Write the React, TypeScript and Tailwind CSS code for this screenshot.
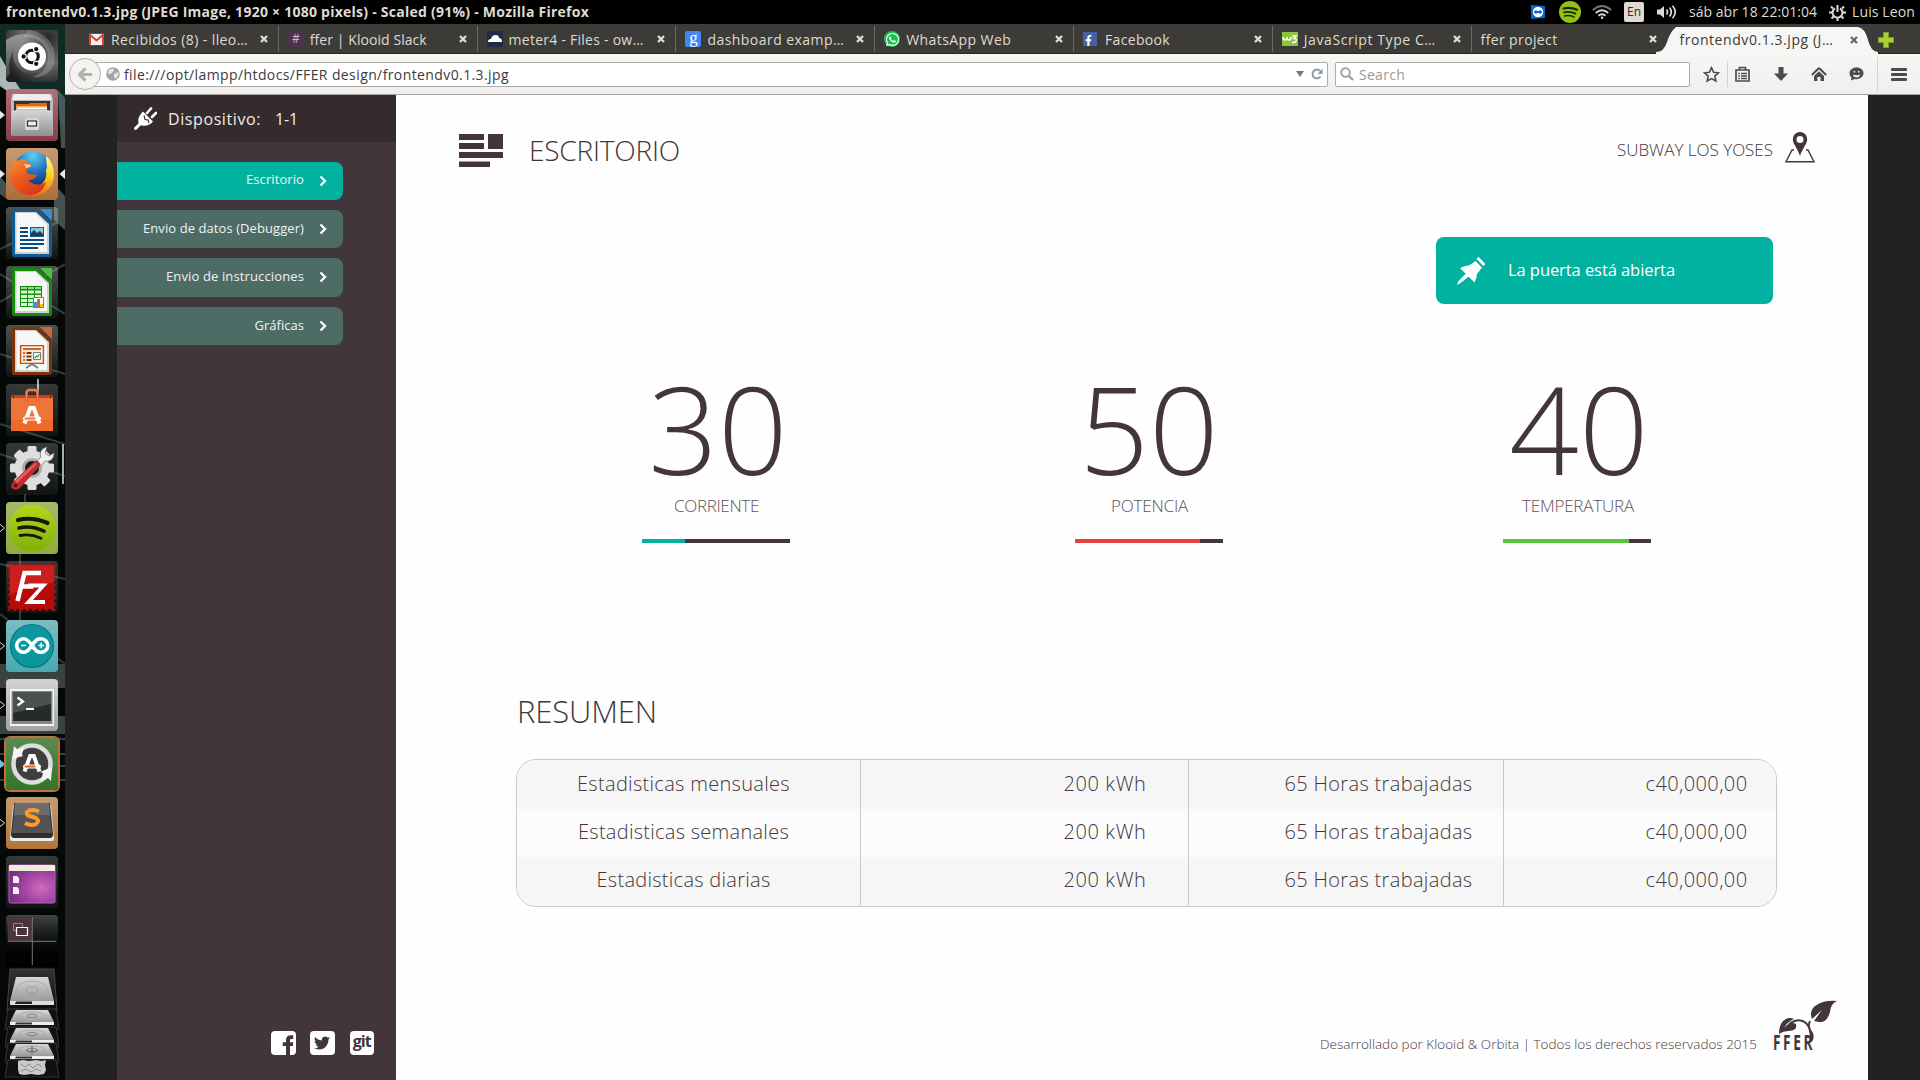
import React, { useLayoutEffect, useRef } from "react";
import { FaTwitter, FaFacebookF, FaWhatsapp } from "react-icons/fa";

/** A single line of text whose tracking is adjusted so that it spans `w` pixels. */
function Fit({ w, className = "", children }: { w: number; className?: string; children: string }) {
  const ref = useRef<HTMLSpanElement>(null);
  useLayoutEffect(() => {
    const el = ref.current;
    if (!el) return;
    el.style.letterSpacing = "0px";
    const natural = el.getBoundingClientRect().width;
    el.style.letterSpacing = `${(w - natural) / children.length}px`;
  }, [w, children]);
  return (
    <span ref={ref} className={"inline-block shrink-0 whitespace-pre " + className}>
      {children}
    </span>
  );
}

/* ---------- Launcher icons ---------- */

const UbuntuIcon = () => (
  <svg viewBox="0 0 52 52" className="size-full">
    <defs>
      <radialGradient id="ub" cx="0.8" cy="0.15" r="1">
        <stop offset="0" stopColor="#262626" />
        <stop offset="0.5" stopColor="#6a6a6a" />
        <stop offset="1" stopColor="#1c1c1c" />
      </radialGradient>
      <linearGradient id="ub2" x1="0" y1="0" x2="1" y2="1">
        <stop offset="0" stopColor="#d8d8d8" stopOpacity=".6" />
        <stop offset="1" stopColor="#555" stopOpacity=".1" />
      </linearGradient>
    </defs>
    <rect width="52" height="52" rx="4" fill="url(#ub)" />
    <path d="M0 10C14 0 38 2 44 20 46 34 38 44 26 44 12 44 4 30 8 20 4 26 2 34 4 44L0 48Z" fill="url(#ub2)" />
    <path d="M22 0C40 2 52 16 48 34 44 44 36 48 26 47 38 44 44 34 41 22 38 12 30 6 16 8Z" fill="#bbb" opacity=".35" />
    <circle cx="26" cy="26.5" r="14" fill="#fff" />
    <circle cx="26" cy="26.5" r="6.3" fill="none" stroke="#111" strokeWidth="3" />
    <g fill="#111" stroke="#fff" strokeWidth="1.1">
      <circle cx="17.6" cy="26.5" r="2.7" />
      <circle cx="30.2" cy="19.2" r="2.7" />
      <circle cx="30.2" cy="33.8" r="2.7" />
    </g>
  </svg>
);

const FilesIcon = () => (
  <svg viewBox="0 0 52 52" className="size-full">
    <defs>
      <linearGradient id="fi" x1="0" y1="0" x2="0" y2="1">
        <stop offset="0" stopColor="#d6d6d6" />
        <stop offset="1" stopColor="#909090" />
      </linearGradient>
    </defs>
    <path d="M6 5h40l1 6v35H5V11z" fill="#b9b9b9" />
    <path d="M8 5h36l2 6H6z" fill="#eee" />
    <path d="M8 12h36v12H8z" fill="#3c3029" />
    <path d="M10 15h13l1-1h17v10H10z" fill="#e2671d" />
    <path d="M10 17h31v7H10z" fill="#f6b35c" />
    <path d="M12 18.500h29v1.500H12z" fill="#fff" />
    <path d="M5.500 22l5-1h31l5 1v25h-41z" fill="url(#fi)" />
    <rect x="19" y="29" width="14" height="12" rx="2.500" fill="#d9d9d9" />
    <rect x="21.500" y="32" width="9" height="5" fill="#eee" stroke="#333" strokeWidth="1.200" />
  </svg>
);

const FirefoxIcon = () => (
  <svg viewBox="0 0 52 52" className="size-full">
    <defs>
      <radialGradient id="fg" cx=".5" cy=".1" r=".9">
        <stop offset="0" stopColor="#5fd0f5" />
        <stop offset=".5" stopColor="#1f6fb8" />
        <stop offset="1" stopColor="#0a2460" />
      </radialGradient>
      <linearGradient id="ff" x1="0" y1="0" x2=".6" y2="1">
        <stop offset="0" stopColor="#f79a2f" />
        <stop offset=".5" stopColor="#ee5e20" />
        <stop offset="1" stopColor="#d93a16" />
      </linearGradient>
      <linearGradient id="fy" x1="0" y1="0" x2="0" y2="1">
        <stop offset="0" stopColor="#fff3a0" />
        <stop offset=".5" stopColor="#fbd31f" />
        <stop offset="1" stopColor="#ee6a1c" />
      </linearGradient>
    </defs>
    <circle cx="27" cy="23" r="19.500" fill="url(#fg)" />
    <path d="M40 8C49 15 50 30 45 38 41 44 34 48 26 48L24 38C34 40 42 34 40 22 42 20 40 14 40 8Z" fill="url(#fy)" />
    <path d="M7 9c1 2 2 3 4 4 3-2 6-2 9-1l3 4 3 1c0 2-3 3-5 4-1 3 0 4 2 5 3 1 5 0 8 1-1 3-5 5-9 5 4 5 12 6 18 2-2 8-8 13-16 13C12 47 4 38 4 26 4 21 5 19 7 17Z" fill="url(#ff)" />
    <path d="M18 16l7 1c0 2-3 3-5 3z" fill="#f9cdb0" />
  </svg>
);

function DocIcon({ dark, light, children }: { dark: string; light: string; children: React.ReactNode }) {
  return (
    <svg viewBox="0 0 52 52" className="size-full">
      <path d="M8 2h23l15 13v33q0 2-2 2H8q-2 0-2-2V4q0-2 2-2z" fill={dark} />
      <path d="M9 5h21l13 12v30H9z" fill="#cfcfcf" />
      <path d="M10.500 6h19L41 17.500V45H10.500z" fill="#f7f7f7" />
      <path d="M34 2h12v12z" fill={light} />
      {children}
    </svg>
  );
}

const WriterIcon = () => (
  <DocIcon dark="#0d5c94" light="#3f8ec9">
    <path d="M14 20h8v2h-8zM14 24h8v2h-8zM14 28h8v2h-8zM14 32h24v2H14zM14 36h24v2H14zM14 40h18v2H14z" fill="#0b4c7c" />
    <path d="M24 20h14v10H24z" fill="#0b5d95" />
    <path d="M25 21h12v8H25z" fill="#83c4ea" />
    <path d="M25 29v-3l3-3 3 3 3-2 3 3v2z" fill="#263c4a" />
    <path d="M35 21h2v2h-2z" fill="#f3c13d" />
  </DocIcon>
);

const CalcIcon = () => (
  <DocIcon dark="#168a0d" light="#52bd45">
    <path d="M14 20h22v21H14z" fill="#148b0c" />
    <path d="M15 21h6v2h-6zM22 21h6v2h-6zM29 21h6v2h-6z" fill="#8ddb83" />
    <path d="M15 24.500h6v3h-6zM22 24.500h6v3h-6zM29 24.500h6v3h-6zM15 29h6v3h-6zM22 29h6v3h-6zM29 29h6v3h-6zM15 33h6v3h-6zM22 33h6v3h-6zM15 37h6v3h-6zM22 37h6v3h-6z" fill="#d8f5d4" />
    <path d="M27.500 31.500h10v10h-10z" fill="#fff" stroke="#777" />
    <path d="M28 36h3v5h-3z" fill="#2e9bea" />
    <path d="M31 33h3v8h-3z" fill="#e0611c" />
    <path d="M34 38h3v3h-3z" fill="#f4c20d" />
  </DocIcon>
);

const ImpressIcon = () => (
  <DocIcon dark="#7d3208" light="#c9683a">
    <path d="M14.600 20.600h22.800v17.800H14.600z" fill="#f9ece2" stroke="#c2500f" strokeWidth="1.400" />
    <path d="M17 23h18v2H17z" fill="#d9641c" />
    <path d="M17 27h2v2h-2zM17 30.500h2v2h-2zM17 34h2v2h-2z" fill="#d9641c" />
    <path d="M20.500 27h5v2h-5zM20.500 30.500h5v2h-5zM20.500 34h5v2h-5z" fill="#7d3208" />
    <path d="M27.500 27.500h7v7h-7z" fill="#fff" stroke="#777" />
    <path d="M28.500 33l2-2 1 1 2-3" stroke="#2fa63a" strokeWidth="1.200" fill="none" />
    <path d="M26 39l-6 4M26 39l6 4" stroke="#777" strokeWidth="1.600" />
  </DocIcon>
);

const LetterA = ({ bar }: { bar: string }) => (
  <g>
    <path d="M18.500 39.500L24.200 24h3.600L33.500 39.500" fill="none" stroke="#fff" strokeWidth="4" />
    <rect x="17" y="32.500" width="18" height="4" rx="2" fill="#fff" />
    <rect x="18.500" y="33.500" width="11" height="2" rx="1" fill={bar} />
  </g>
);

const SoftwareIcon = () => (
  <svg viewBox="0 0 52 52" className="size-full">
    <path d="M5 11h42v5H5z" fill="#c4451c" />
    <path d="M5 14h42v33H5z" fill="#ef7438" />
    <path d="M5 36h42v11H5z" fill="#f0692a" />
    <path d="M5 11l3-2v6zM47 11l-3-2v6z" fill="#8c2e12" />
    <path d="M20.500 18V9q0-3 3-3h5q3 0 3 3v9" fill="none" stroke="#c84f28" strokeWidth="3" />
    <path d="M20.500 18V9q0-3 3-3h5q3 0 3 3v9" fill="none" stroke="#f08b5c" strokeWidth="1.400" />
    <LetterA bar="#ef7438" />
  </svg>
);

const SettingsIcon = () => (
  <svg viewBox="0 0 52 52" className="size-full">
    <g fill="#dedede" transform="translate(26 25)">
      {[0, 45, 90, 135].map((a) => (
        <rect key={a} x="-4.500" y="-22" width="9" height="44" rx="1.500" transform={`rotate(${a})`} />
      ))}
      <circle r="17.500" />
      <circle r="10" fill="#aaa" />
      <circle r="7" fill="#181818" />
    </g>
    <path d="M31 18l4-4c-2-5 1-9 6-10l-2 6 4 3 5-3c0 6-4 9-9 8l-4 5z" fill="#f0f0f0" stroke="#777" strokeWidth=".8" />
    <path d="M7 39L29 18q2-1 4 1t1 4L14 45q-3 3-7 1t0-7z" fill="#c22a2c" />
    <path d="M9 38L29 20l2 1L11 40z" fill="#e4605c" />
    <circle cx="9.500" cy="42.500" r="1.800" fill="#4f0d10" />
  </svg>
);

const SpotifyTile = () => (
  <svg viewBox="0 0 52 52" className="size-full">
    <defs>
      <linearGradient id="sp" x1="0" y1="0" x2="0" y2="1">
        <stop offset="0" stopColor="#b2d81c" />
        <stop offset="1" stopColor="#82b008" />
      </linearGradient>
    </defs>
    <circle cx="26" cy="26" r="23.500" fill="url(#sp)" />
    <g fill="none" stroke="#16190a" strokeLinecap="round">
      <path d="M12 18c10-2.500 20-1 29.500 3" strokeWidth="4.200" />
      <path d="M13 26c8-2 16-1 25 3.200" strokeWidth="3.600" />
      <path d="M14 33.500c8-1.500 14-.5 21 2.700" strokeWidth="2.800" />
    </g>
  </svg>
);

const FilezillaIcon = () => (
  <svg viewBox="0 0 52 52" className="size-full">
    <rect x="4" y="4" width="44" height="44" fill="#b50b0b" stroke="#b50b0b" strokeWidth="3.600" strokeDasharray="3.200 3.080" />
    <path d="M4 4h44v18Q26 22 4 34z" fill="#d33" opacity=".5" />
    <path d="M11.500 40L18.500 12H35M14.500 25.500h13" fill="none" stroke="#fff" strokeWidth="4.500" />
    <path d="M22 24.500h15.500L22.500 41H39" fill="none" stroke="#fff" strokeWidth="3.800" />
  </svg>
);

const ArduinoIcon = () => (
  <svg viewBox="0 0 52 52" className="size-full">
    <circle cx="26" cy="26" r="21.500" fill="#0c969e" stroke="#087a82" strokeWidth="1.200" />
    <g fill="none" stroke="#fff" strokeWidth="3.600">
      <path d="M26 25.500C22 19.500 20 18.700 17.500 18.700a6.800 6.800 0 0 0 0 13.600C20 32.300 22 31.500 26 25.500S32 18.700 35 18.700a6.800 6.800 0 0 1 0 13.600C32 32.300 30 31.500 26 25.500Z" />
      <path d="M15 25.500h5M32.500 25.500h5.400M35.200 22.800v5.400" strokeWidth="1.600" />
    </g>
  </svg>
);

const TerminalIcon = () => (
  <svg viewBox="0 0 52 52" className="size-full">
    <path d="M4 10h44v37H4z" fill="#f4f4f4" />
    <path d="M5.500 12h41v33h-41z" fill="#888" />
    <path d="M7 13h38v29H7z" fill="#262a2a" />
    <path d="M7 13h38v12L7 34z" fill="#4b5050" />
    <path d="M11.500 18.500l5.500 4-5.500 4" fill="none" stroke="#fff" strokeWidth="2.200" />
    <path d="M20 29h8v2h-8z" fill="#fff" />
  </svg>
);

const UpdaterIcon = () => (
  <svg viewBox="0 0 52 52" className="size-full">
    <circle cx="26" cy="26" r="18.500" fill="#3e3e3e" stroke="#ddd" strokeWidth="4.500" />
    <path d="M6 21l2-13 3 3 7-1-2 6 1 2z" fill="#f5f5f5" />
    <path d="M46 29l-1 14-3-3-7 3 2-8-3-1z" fill="#f5f5f5" />
    <g transform="translate(0 -6)">
      <LetterA bar="#e85d14" />
    </g>
  </svg>
);

const SublimeIcon = () => (
  <svg viewBox="0 0 52 52" className="size-full">
    <path d="M7 8h38l3 34q0 2-2 2H6q-2 0-2-2z" fill="#e9e9e9" />
    <path d="M9 6h34q1 0 1 1l3 30q0 4-3 4H8q-3 0-3-4L8 7q0-1 1-1z" fill="#2d2d2d" />
    <path d="M9 6h34l3 30H6z" fill="#535353" />
    <path d="M9 6h34l1 12H8z" fill="#6c6c6c" />
    <path d="M33 14.500Q28 12 23 13.500q-4 2-1 5l8 2.500q4 3 0 6-5 2.500-11-1" fill="none" stroke="#ff9b2b" strokeWidth="4" />
  </svg>
);

const DesktopIcon = () => (
  <svg viewBox="0 0 52 52" className="size-full">
    <defs>
      <radialGradient id="de" cx=".7" cy=".6" r=".8">
        <stop offset="0" stopColor="#cf6cc0" />
        <stop offset=".5" stopColor="#a043a0" />
        <stop offset="1" stopColor="#6a2a7c" />
      </radialGradient>
    </defs>
    <rect x="3" y="9" width="46" height="38" rx="1.500" fill="url(#de)" stroke="#c45bc2" />
    <path d="M3 9h46v6H3z" fill="#efeddc" />
    <path d="M7 20h4l2 2v5H7zM7 31h4l2 2v5H7z" fill="#f5f0f5" />
  </svg>
);

const WorkspaceIcon = () => (
  <svg viewBox="0 0 52 52" className="size-full">
    <path d="M2 2h24v24H2z" fill="#4b353c" />
    <path d="M2 26.300h48M26.300 2v48" stroke="#777" strokeWidth="1" />
    <path d="M7.500 8.500h9v7h-9z" fill="none" stroke="#888" />
    <path d="M10.500 12.500h11v8h-11z" fill="#4b353c" stroke="#fff" strokeWidth="1.200" />
  </svg>
);

const DiskStack = () => (
  <svg viewBox="0 0 65 111" className="h-[111px] w-[65px]">
    <defs>
      <linearGradient id="dk" x1="0" y1="0" x2="0" y2="1">
        <stop offset="0" stopColor="#d8d8d8" />
        <stop offset="1" stopColor="#999" />
      </linearGradient>
      <linearGradient id="dt" x1="0" y1="0" x2="0" y2="1">
        <stop offset="0" stopColor="#333" />
        <stop offset="1" stopColor="#0a0a0a" />
      </linearGradient>
    </defs>
    <path d="M10 1h44l3 42H7z" fill="url(#dt)" stroke="#444" />
    <path d="M16 9h32l6 24H10z" fill="url(#dk)" />
    <path d="M10 33h44v4H10z" fill="#ddd" />
    <path d="M16 33.500h16v2.500H15z" fill="#222" />
    <ellipse cx="32" cy="22" rx="15" ry="9" fill="none" stroke="#aaa" />
    <ellipse cx="32" cy="22" rx="6" ry="3.500" fill="none" stroke="#999" />
    {[42, 60, 76].map((y) => (
      <g key={y}>
        <path d={`M8 ${y - 1}h48l3 20H5z`} fill="#111" stroke="#444" strokeWidth=".7" />
        <path d={`M16 ${y}h32l6 12H10z`} fill="url(#dk)" />
        <path d={`M10 ${y + 12}h44v3H10z`} fill="#eee" />
        <path d={`M16 ${y + 12.5}h16v2H15z`} fill="#333" />
        <ellipse cx="32" cy={y + 6} rx="13" ry="4" fill="none" stroke="#aaa" />
        <ellipse cx="32" cy={y + 6} rx="5" ry="1.700" fill="none" stroke="#888" />
      </g>
    ))}
    <path d="M32 78v8M26 82q6 4 12 0" stroke="#777" strokeWidth="1.500" fill="none" />
    <path d="M8 92h48l3 17H5z" fill="#111" stroke="#444" strokeWidth=".7" />
    <path d="M18 93l5-1 6 1 7-1 6 1 4-1-1 5 1 5-2 4-6 1-7-1-7 1-5-1-1-5z" fill="#c9cbc6" />
    <path d="M21 96l4 3 4-3 4 4 5-4 4 3M21 103l5-2 5 3 5-3 5 2" stroke="#8c8e88" fill="none" />
  </svg>
);

type Arrow = "solid" | "outline" | "blue" | undefined;
const launcher: { icon: React.FC; bg: string; arrow?: Arrow; focused?: boolean }[] = [
  { icon: UbuntuIcon, bg: "bg-[#333]" },
  { icon: FilesIcon, bg: "bg-linear-to-b from-[#b0707a] to-[#8a3a48]", arrow: "solid" },
  { icon: FirefoxIcon, bg: "bg-linear-to-b from-[#c99a77] to-[#ad6c38]", arrow: "solid", focused: true },
  { icon: WriterIcon, bg: "bg-linear-to-b from-white/30 to-white/5" },
  { icon: CalcIcon, bg: "bg-linear-to-b from-white/30 to-white/5" },
  { icon: ImpressIcon, bg: "bg-linear-to-b from-white/30 to-white/5" },
  { icon: SoftwareIcon, bg: "bg-linear-to-b from-white/20 to-white/5" },
  { icon: SettingsIcon, bg: "bg-linear-to-b from-white/20 to-white/5" },
  { icon: SpotifyTile, bg: "bg-linear-to-b from-[#a9b86a] to-[#8fae3c]", arrow: "outline" },
  { icon: FilezillaIcon, bg: "bg-linear-to-b from-white/20 to-white/5" },
  { icon: ArduinoIcon, bg: "bg-linear-to-b from-[#7cbcc0] to-[#4aa9b0]", arrow: "outline" },
  { icon: TerminalIcon, bg: "bg-linear-to-b from-[#d4d4d4] to-[#a2a2a2]", arrow: "outline" },
  { icon: UpdaterIcon, bg: "bg-linear-to-b from-[#5b8a50] to-[#337528] ring-2 ring-[#c0703c]", arrow: "blue" },
  { icon: SublimeIcon, bg: "bg-linear-to-b from-[#c69a70] to-[#b0763a]", arrow: "outline" },
  { icon: DesktopIcon, bg: "bg-linear-to-b from-white/20 to-white/5" },
  { icon: WorkspaceIcon, bg: "bg-linear-to-b from-white/25 to-black" },
];

function Launcher() {
  return (
    <aside className="relative flex h-[1056px] w-[65px] shrink-0 flex-col overflow-hidden bg-[#040807]">
      <svg viewBox="0 0 65 1056" className="absolute inset-0 h-full w-full">
        <path d="M0 0h65v100L0 60z" fill="#0e2b26" />
        <path d="M0 32l8 14 14 22 -8 4L0 62z" fill="#a9b8b5" />
        <path d="M58 66l7 8v50h-4zM0 152l8 10v14l-8-6zM54 160l11 12v34l-11-10z" fill="#60716d" opacity=".7" />
        <g stroke="#40534e" strokeWidth="2" opacity=".7">
          <path d="M0 225L65 195M0 250L65 290M0 278L65 240M0 330L65 350M0 400L65 420M25 470v22M0 430L65 452M0 540L65 555M0 590L65 640M20 530V600" />
        </g>
        <path d="M63 420v40M38 355v30" stroke="#9fb0ac" strokeWidth="2" />
        <path d="M0 640h65v24H0zM0 692h65v18H0z" fill="#6c7c7b" opacity=".5" />
        <path d="M0 715h65M0 730h65M0 742h65M0 756h65" stroke="#34433f" strokeWidth="2" />
        <path d="M0 775h65v55H0z" fill="#050a09" />
      </svg>
      <div className="relative flex flex-col gap-[7px] pt-[6px]">
        {launcher.map(({ icon: Icon, bg, arrow, focused }, i) => (
          <div key={i} className="flex h-[52px] w-[65px] items-center">
            <div className="flex w-[6px] items-center">
              {arrow && (
                <svg viewBox="0 0 6 10" className="h-[10px] w-[6px]">
                  <path
                    d="M-1 0.500L4.500 5-1 9.500z"
                    fill={arrow === "outline" ? "none" : arrow === "blue" ? "#6cc4ee" : "#e8e8e8"}
                    stroke={arrow === "blue" ? "#6cc4ee" : "#d8d8d8"}
                  />
                </svg>
              )}
            </div>
            <div className={"size-[52px] overflow-hidden rounded-[4px] " + bg}>
              <Icon />
            </div>
            {focused && (
              <svg viewBox="0 0 7 10" className="h-[10px] w-[7px]">
                <path d="M7 0L1.500 5 7 10z" fill="#e8e8e8" />
              </svg>
            )}
          </div>
        ))}
      </div>
      <div className="relative mt-[1px]">
        <DiskStack />
      </div>
    </aside>
  );
}

/* ---------- System panel ---------- */

function SystemPanel() {
  return (
    <header className="flex h-6 items-center bg-black pl-[6px] font-['Open_Sans',sans-serif] text-[#dfdbd2]">
      <Fit w={583} className="text-[14px] leading-6 font-bold">
        frontendv0.1.3.jpg (JPEG Image, 1920 × 1080 pixels) - Scaled (91%) - Mozilla Firefox
      </Fit>
      <div className="ml-auto flex items-center pr-[5px]">
        <svg viewBox="0 0 14 16" className="h-4 w-[14px]">
          <path d="M0 1l14 1v12L0 15z" fill="#0c68c8" />
          <circle cx="7" cy="8" r="5.200" fill="#fff" />
          <path d="M2.500 8L5.500 5.500V7h3V5.500l3 2.500-3 2.500V9h-3v1.500z" fill="#0c68c8" />
        </svg>
        <svg viewBox="0 0 22 22" className="ml-[14px] size-[22px]">
          <circle cx="11" cy="11" r="11" fill="#8fc412" />
          <g fill="none" stroke="#20270a" strokeLinecap="round">
            <path d="M4.500 7.500c5-1.300 9.500-.8 13.500 1.300" strokeWidth="2.200" />
            <path d="M5 11.400c4-1 8-.6 11.500 1.200" strokeWidth="1.800" />
            <path d="M5.500 15c3.500-.8 6.500-.4 9.500 1" strokeWidth="1.500" />
          </g>
        </svg>
        <svg viewBox="0 0 20 14" className="ml-[11px] h-[14px] w-[20px]" fill="none" stroke="#dfdbd2" strokeWidth="1.900">
          <path d="M.8 5Q10-3 19.200 5" stroke="#77746e" />
          <path d="M3.800 8Q10 2.500 16.200 8" />
          <path d="M6.500 10.700Q10 7.800 13.500 10.700" />
          <circle cx="10" cy="12.800" r="1.200" fill="#dfdbd2" stroke="none" />
        </svg>
        <span className="ml-[12px] flex h-[20px] w-[20px] items-center justify-center rounded-[2px] bg-[#dfdbd2] text-[12px] font-medium text-[#2c2b28]">
          En
        </span>
        <svg viewBox="0 0 20 14" className="ml-[13px] h-[14px] w-[20px]" fill="none" stroke="#dfdbd2" strokeWidth="1.700">
          <path d="M0 4.500h3L7 1v12L3 9.500H0z" fill="#dfdbd2" stroke="none" />
          <path d="M9.500 4.500q2 2.500 0 5M12.500 2.500q3.500 4.500 0 9M15.500 .8q5.500 6.200 0 12.400" />
        </svg>
        <Fit w={128} className="ml-[12px] text-[14px] leading-6 font-medium">
          sáb abr 18 22:01:04
        </Fit>
        <svg viewBox="0 0 17 17" className="ml-[12px] size-[17px]" fill="none" stroke="#dfdbd2">
          <path d="M6 4.300a5 5 0 1 0 5 0" strokeWidth="2" />
          <path d="M8.500 1v7" strokeWidth="2" />
          <path d="M2 2.500l2 2M15 2.500l-2 2M0 8.500h3M14 8.500h3M2.500 14.500l2-2M14.500 14.500l-2-2M8.500 14v3" strokeWidth="2" />
        </svg>
        <Fit w={63} className="ml-[6px] text-[14px] leading-6 font-medium">
          Luis Leon
        </Fit>
      </div>
    </header>
  );
}

/* ---------- Browser chrome ---------- */

const CloseIcon = ({ color = "#dcdcd8" }: { color?: string }) => (
  <svg viewBox="0 0 8 8" className="size-2">
    <path d="M1 1l6 6M7 1L1 7" stroke={color} strokeWidth="2.400" />
  </svg>
);

const favicons = {
  gmail: (
    <svg viewBox="0 0 16 16" className="size-[15px]">
      <path d="M1 2h14v12H1z" fill="#f4f2f0" />
      <path d="M1 14V3l7 6 7-6v11" fill="none" stroke="#d8402f" strokeWidth="2.200" />
    </svg>
  ),
  slack: <span className="flex size-4 items-center justify-center bg-[#4b3349] text-[12px] text-[#c9b9c7]">#</span>,
  cloud: (
    <svg viewBox="0 0 16 16" className="size-4">
      <rect width="16" height="16" rx="1" fill="#1d2d44" />
      <path d="M1 11q0-3 3-3 1-4 4.500-4T12 7q3 0 3 4z" fill="#fff" />
    </svg>
  ),
  google: (
    <span className="flex size-4 items-center justify-center rounded-[2px] bg-[#4285f4] pb-[3px] font-['Liberation_Serif',serif] text-[17px] leading-none text-white">
      g
    </span>
  ),
  whatsapp: (
    <span className="flex size-4 items-center justify-center rounded-full bg-[#1fbf4d]">
      <FaWhatsapp className="size-[15px] text-white" />
    </span>
  ),
  facebook: (
    <span className="flex size-[14px] items-end justify-end bg-[#4760a5] pr-[3px]">
      <FaFacebookF className="size-[11px] text-white" />
    </span>
  ),
  w3: (
    <svg viewBox="0 0 16 14" className="h-[14px] w-4">
      <rect width="16" height="14" fill="#8bc53f" />
      <path d="M1 5q0 3 2 3t2-3q0 3 2 3t2-3M10 4h4l-2 2.500q3 0 2 2.500t-4 1" fill="none" stroke="#fff" strokeWidth="1.500" />
    </svg>
  ),
};

const tabs: { title: string; w: number; icon?: keyof typeof favicons }[] = [
  { title: "Recibidos (8) - lleo…", w: 137, icon: "gmail" },
  { title: "ffer | Klooid Slack", w: 117, icon: "slack" },
  { title: "meter4 - Files - ow…", w: 135, icon: "cloud" },
  { title: "dashboard examp…", w: 137, icon: "google" },
  { title: "WhatsApp Web", w: 105, icon: "whatsapp" },
  { title: "Facebook", w: 65, icon: "facebook" },
  { title: "JavaScript Type C…", w: 132, icon: "w3" },
  { title: "ffer project", w: 77 },
];

function TabBar() {
  return (
    <div className="flex h-[30px] items-stretch border-b border-[#282724] bg-[#3c3b37] pl-[15px] font-['Open_Sans',sans-serif] text-[14px] text-[#dfdbd2]">
      {tabs.map((t, i) => (
        <div key={t.title} className="flex w-[198.800px] shrink-0 items-center pt-px pr-[11px] pl-[9px]">
          {t.icon && <span className="flex w-[22px] items-center">{favicons[t.icon]}</span>}
          <Fit w={t.w}>{t.title}</Fit>
          <span className="ml-auto">
            <CloseIcon />
          </span>
          {i < 7 && <span className="mr-[-11px] ml-[10px] h-[26px] w-px bg-[#6b6a64]" />}
          {i === 7 && <span className="mr-[-11px] ml-[13px]" />}
        </div>
      ))}
      <div className="relative z-10 -mb-px -ml-[14px] flex w-[222px] shrink-0 items-center pt-px pr-[20px] pl-[23px] text-[#3c3b37]">
        <svg viewBox="0 0 222 30" className="absolute inset-0 h-[30px] w-[222px]">
          <path d="M0 28Q8 28 11 18T20 3H202Q209 4 212 16T222 28V30H0Z" fill="#f6f6f5" />
        </svg>
        <Fit w={154} className="relative">
          frontendv0.1.3.jpg (J…
        </Fit>
        <span className="relative ml-auto">
          <CloseIcon color="#6c6a65" />
        </span>
      </div>
      <svg viewBox="0 0 16 16" className="mt-[8px] size-4">
        <path d="M5.500 .5h5v5h5v5h-5v5h-5v-5h-5v-5h5z" fill="#a9cf38" stroke="#7c9f22" />
      </svg>
    </div>
  );
}

function NavBar() {
  return (
    <div className="flex h-[41px] items-center border-b border-[#a9a5a0] bg-linear-to-b from-[#f6f6f5] to-[#f0efed] font-['Open_Sans',sans-serif] text-[14px]">
      <div className="relative z-10 ml-[4px] flex size-8 shrink-0 items-center justify-center rounded-full border border-[#b4b1ac] bg-[#f4f3f2]">
        <svg viewBox="0 0 16 16" className="size-[15px]">
          <path d="M8 1.500L1.500 8 8 14.500M2 8h13" fill="none" stroke="#b5b2ad" strokeWidth="3.400" />
        </svg>
      </div>
      <div className="-ml-[8px] flex h-[25px] w-[1235px] shrink-0 items-center rounded-[2px] border border-[#b0ada8] bg-white pr-[4px] pl-[12px]">
        <svg viewBox="0 0 14 14" className="size-[14px]">
          <circle cx="7" cy="7" r="6.800" fill="#a5a5a5" />
          <path d="M3 2.500l4-1 1 2-2 2-2 2-2-1zM8 7l4-2 .5 3L10 12 8 10z" fill="#e6e6e6" />
        </svg>
        <Fit w={385} className="ml-[4px] text-[#3c3c3c]">
          file:///opt/lampp/htdocs/FFER design/frontendv0.1.3.jpg
        </Fit>
        <svg viewBox="0 0 8 6" className="ml-auto h-[6px] w-2">
          <path d="M0 0h8L4 6z" fill="#777" />
        </svg>
        <svg viewBox="0 0 12 12" className="ml-[7px] size-3">
          <path d="M9.500 8.500A4.400 4.400 0 1 1 9 2.800" fill="none" stroke="#8b98a8" strokeWidth="1.900" />
          <path d="M11.500 .5v5.500H6.500z" fill="#8b98a8" />
        </svg>
      </div>
      <div className="ml-[7px] flex h-[25px] w-[355px] shrink-0 items-center rounded-[2px] border border-[#b0ada8] bg-white pl-1">
        <svg viewBox="0 0 14 14" className="size-[14px]" fill="none" stroke="#9b9b9b">
          <circle cx="5.500" cy="5.500" r="4.300" strokeWidth="1.700" />
          <path d="M8.500 8.500L13 13" strokeWidth="2.200" />
        </svg>
        <Fit w={46} className="ml-[5px] text-[#999]">
          Search
        </Fit>
      </div>
      <div className="flex items-center pl-[13px] text-[#4c4c4c]">
        <svg viewBox="0 0 18 18" className="size-[17px]">
          <path d="M9 1.800l2.200 4.800 5.200.6-3.900 3.500 1.100 5.200L9 13.300l-4.600 2.600 1.100-5.200L1.600 7.200l5.200-.6z" fill="none" stroke="currentColor" strokeWidth="1.700" />
        </svg>
        <span className="mx-[7px] h-[26px] w-px bg-[#d0d2d4]" />
        <svg viewBox="0 0 15 16" className="h-4 w-[15px]" fill="none" stroke="currentColor">
          <path d="M1 4h13v11H1z" strokeWidth="1.700" />
          <path d="M4.500 4V1.500h6V4" strokeWidth="1.700" />
          <path d="M3.300 7.500h1.500M6 7.500h6M3.300 10h1.500M6 10h6M3.300 12.500h1.500M6 12.500h6" strokeWidth="1.300" />
        </svg>
        <svg viewBox="0 0 14 14" className="ml-[24px] size-[14px]">
          <path d="M4.500 0h5v6.500H14L7 14 0 6.500h4.500z" fill="currentColor" />
        </svg>
        <svg viewBox="0 0 16 14" className="ml-[23px] h-[14px] w-4">
          <path d="M8 1L.8 8M8 1l7.200 7" stroke="currentColor" strokeWidth="2" />
          <path d="M8 4.300L13 9v5H9.600v-4H6.400v4H3V9z" fill="currentColor" />
        </svg>
        <svg viewBox="0 0 16 14" className="ml-[22px] h-[14px] w-[15px]">
          <path d="M8 0c4.400 0 7.500 2.700 7.500 6S12.400 12.500 8 12.500q-1 0-2-.2L2 14l.7-3.300Q.5 8.800.5 6.200C.5 2.700 3.600 0 8 0z" fill="currentColor" />
          <path d="M4 7.500q4 1.500 8 0-.8 3.200-4 3.200T4 7.500z" fill="#eee" />
          <path d="M5 3.800h1.600v1.600H5zM9.500 3.800h1.600v1.600H9.500z" fill="#eee" />
        </svg>
        <span className="mr-[13px] ml-[13px] h-[34px] w-px bg-[#ccd3da]" />
        <span className="flex w-4 flex-col gap-[2px]">
          <i className="h-[3px] rounded-[1px] bg-[#4c4c4c]" />
          <i className="h-[3px] rounded-[1px] bg-[#4c4c4c]" />
          <i className="h-[3px] rounded-[1px] bg-[#4c4c4c]" />
        </span>
      </div>
    </div>
  );
}

/* ---------- Dashboard ---------- */

const menu = [
  { label: "Escritorio", w: 58, active: true },
  { label: "Envio de datos (Debugger)", w: 161 },
  { label: "Envio de instrucciones", w: 138 },
  { label: "Gráficas", w: 49.5 },
];

function Sidebar() {
  return (
    <nav className="flex w-[279px] shrink-0 flex-col bg-[#43363a] font-['Open_Sans',sans-serif]">
      <div className="flex h-[47px] items-center bg-[#352a2c] pl-[17px] text-[#f0eded]">
        <svg viewBox="0 0 23 23" className="size-[23px]">
          <path d="M1.500 21.500l5-5" stroke="#fff" strokeWidth="3" strokeLinecap="round" />
          <path d="M13 6l4-4.500M18 10l4-4" stroke="#fff" strokeWidth="2.600" strokeLinecap="round" />
          <path d="M9 4.500L19 14.500Q14 20 8 18.500L5.500 18 4.500 16Q3 10 9 4.500z" fill="#fff" />
          <path d="M10 8.500l1 4 3 .5 1 3" stroke="#352a2c" strokeWidth="1.100" fill="none" />
        </svg>
        <Fit w={93} className="ml-[11px] text-[16px] font-medium">
          Dispositivo:
        </Fit>
        <Fit w={23} className="ml-[14px] text-[16px] font-medium">
          1-1
        </Fit>
      </div>
      <ul className="mt-[19.500px] flex w-[226px] flex-col gap-[10px]">
        {menu.map((m) => (
          <li
            key={m.label}
            className={
              "flex h-[38.400px] items-center justify-end rounded-r-[8px] pr-[16px] text-[13px] text-[#eef3f2] " +
              (m.active ? "bg-[#02b2a1]" : "bg-[#4d6c66]")
            }
          >
            <Fit w={m.w} className="-mt-px">
              {m.label}
            </Fit>
            <svg viewBox="0 0 8 12" className="ml-[15px] h-3 w-2">
              <path d="M1.500 1.500L6 6l-4.500 4.500" fill="none" stroke="#fff" strokeWidth="2.300" />
            </svg>
          </li>
        ))}
      </ul>
      <div className="mt-auto flex gap-[15px] pr-[21px] pb-[25px] pl-[154px]">
        <span className="flex size-[24.500px] items-end justify-end rounded-[4px] bg-white pr-[2px]">
          <svg viewBox="0 0 12 20" className="h-[20px] w-[12px]">
            <path d="M4 20v-9H.8V7.300H4V5Q4 .3 8.600.3h2.600V4H9.300Q8 4 8 5.300v2h3.300L10.900 11H8v9z" fill="#43363a" />
          </svg>
        </span>
        <span className="-ml-[0.500px] flex size-[24.500px] items-center justify-center rounded-[4px] bg-white">
          <FaTwitter className="size-[16px] text-[#43363a]" />
        </span>
        <span className="flex size-[24.500px] items-center justify-center rounded-[4px] bg-white pb-[3px] text-[16px] leading-none font-bold tracking-[-1px] text-[#43363a]">
          git
        </span>
      </div>
    </nav>
  );
}

const gauges = [
  { value: "30", label: "CORRIENTE", lw: 85, pct: 29.5, color: "bg-[#02b2a1]", left: "ml-[245.500px]", shift: "pl-[5px]" },
  { value: "50", label: "POTENCIA", lw: 77, pct: 84.5, color: "bg-[#e8403f]", left: "ml-[285px]", shift: "pl-[1px]" },
  { value: "40", label: "TEMPERATURA", lw: 112, pct: 85, color: "bg-[#56c435]", left: "ml-[280.500px]", shift: "pl-[4px]" },
];

const rows = [
  { label: "Estadisticas mensuales", w: 213, box: "h-[49px] bg-[#f6f6f6] leading-[48px]" },
  { label: "Estadisticas semanales", w: 211, box: "h-[48px] bg-[#fcfcfc] leading-[46px]" },
  { label: "Estadisticas diarias", w: 174, box: "h-[49px] bg-[#f6f6f6] leading-[46px]" },
];

function Dashboard() {
  return (
    <main className="flex w-[1472px] shrink-0 flex-col bg-[#fefefe] font-['Open_Sans',sans-serif] text-[#43363a]">
      <div className="flex h-[72px] items-end pr-[53px] pl-[63px]">
        <svg viewBox="0 0 44 33" className="h-[33px] w-[44px]" fill="#43363a">
          <path d="M0 0h25v6H0zM0 9h25v6H0zM29 0h15v15H29zM0 18h44v6H0zM0 27.500h31v5.500H0z" />
        </svg>
        <Fit w={151} className="ml-[26px] text-[28px] leading-[33px] font-light">
          ESCRITORIO
        </Fit>
        <div className="mb-[4px] ml-auto flex items-end">
          <Fit w={156} className="mb-[1px] text-[17px] leading-6 font-[350]">
            SUBWAY LOS YOSES
          </Fit>
          <svg viewBox="0 0 30 31" className="ml-[12px] h-[31px] w-[30px]">
            <path d="M9 18H7L1 29.800h28L23 18h-2" fill="none" stroke="#43363a" strokeWidth="1.400" />
            <path fillRule="evenodd" d="M15 0a7.200 7.200 0 0 1 7.200 7.200C22.200 12 17 17 15 24 13 17 7.800 12 7.800 7.200A7.200 7.200 0 0 1 15 0zm0 4a3.500 3.500 0 1 0 0 7 3.500 3.500 0 0 0 0-7z" fill="#43363a" />
          </svg>
        </div>
      </div>

      <div className="mt-[70px] ml-[1040px] flex h-[67px] w-[337px] items-center rounded-[8px] bg-[#02b2a1] pl-[21px] text-white">
        <svg viewBox="0 0 28 28" className="size-7">
          <path d="M0 28L1.500 24 10 15.500 13 18.500 3.500 26z" fill="#fff" />
          <path d="M3 11Q9 8 12 8.500L18.500 4 25 10.500 20 17Q20 21 17.500 25.500z" fill="#fff" />
          <path d="M20.500 1L27.500 8" stroke="#fff" strokeWidth="3" />
        </svg>
        <Fit w={167} className="-mt-px ml-[23px] text-[16.500px]">
          La puerta está abierta
        </Fit>
      </div>

      <div className="mt-[64px] flex">
        {gauges.map((g) => (
          <div key={g.label} className={"flex w-[148px] flex-col items-center " + g.left}>
            <div className={"text-[122px] leading-[120px] font-light " + g.shift}>{g.value}</div>
            <Fit w={g.lw} className="mt-[6px] ml-[2px] text-[17px] leading-6 font-light text-[#5d5356]">
              {g.label}
            </Fit>
            <div className="mt-[21px] flex h-1 w-full bg-[#43363a]">
              <div className={g.color} style={{ width: `${g.pct}%` }} />
            </div>
          </div>
        ))}
      </div>

      <h2 className="mt-[146px] ml-[121px] h-[44px]">
        <Fit w={140} className="text-[31px] leading-[44px] font-light">
          RESUMEN
        </Fit>
      </h2>

      <div className="mt-[26px] ml-[119.500px] w-[1261px] overflow-hidden rounded-[20px] border border-[#c9c9c9] text-[20px] font-[350]">
        {rows.map((r) => (
          <div key={r.label} className={"grid grid-cols-[344px_328px_315px_1fr] items-stretch " + r.box}>
            <div className="border-r border-[#c9c9c9] pr-[9px] text-center">
              <Fit w={r.w}>{r.label}</Fit>
            </div>
            <div className="border-r border-[#c9c9c9] pr-[41px] text-right">
              <Fit w={83}>200 kWh</Fit>
            </div>
            <div className="border-r border-[#c9c9c9] pr-[30px] text-right">
              <Fit w={188}>65 Horas trabajadas</Fit>
            </div>
            <div className="pr-[28px] text-right">
              <Fit w={102}>c40,000,00</Fit>
            </div>
          </div>
        ))}
      </div>

      <footer className="mt-auto flex items-end justify-end pr-[31px] pb-[30px]">
        <Fit w={437} className="mb-[-4px] text-[13.500px] leading-5 font-[360]">
          Desarrollado por Klooid &amp; Orbita | Todos los derechos reservados 2015
        </Fit>
        <div className="relative ml-[16px] h-[50px] w-[64px]">
          <svg viewBox="0 0 64 50" className="absolute inset-0 size-full">
            <path d="M64 1Q58 3 57 12 54 23 46 22L41 21 49 10 39 19Q36 11 42 6 50 0 64 1z" fill="#43363a" />
            <path d="M6 34Q6 22 13 19 16 17 21 19 14 22 11 28 17 21 23 24 25 31 15 31 10 31 6 34z" fill="#43363a" />
            <path d="M16 24Q26 17 33 23 38 28 38 40M37 21Q34 27 39 33 41 39 37 42" fill="none" stroke="#43363a" strokeWidth="1.900" />
          </svg>
          <span className="absolute bottom-[-4px] left-0 origin-left scale-x-[0.650] text-[21px] leading-6 font-bold tracking-[4px]">FFER</span>
        </div>
      </footer>
    </main>
  );
}

export default function App() {
  return (
    <div className="flex h-[1080px] w-[1920px] flex-col overflow-hidden bg-[#222]">
      <SystemPanel />
      <div className="flex min-h-0 flex-1">
        <Launcher />
        <div className="flex min-w-0 flex-1 flex-col">
          <TabBar />
          <NavBar />
          <div className="flex min-h-0 flex-1 bg-[#222222] pl-[52px]">
            <Sidebar />
            <Dashboard />
          </div>
        </div>
      </div>
    </div>
  );
}
